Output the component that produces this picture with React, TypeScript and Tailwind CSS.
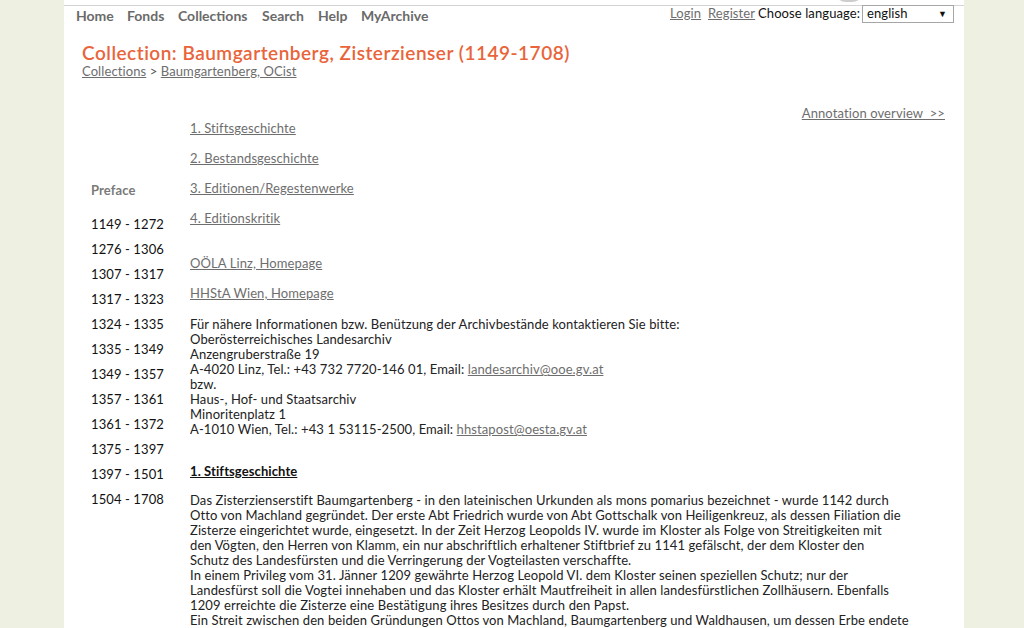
import React from "react";

const font = { fontFamily: "Lato, 'Liberation Sans', sans-serif" };

const dates = [
  "1149 - 1272",
  "1276 - 1306",
  "1307 - 1317",
  "1317 - 1323",
  "1324 - 1335",
  "1335 - 1349",
  "1349 - 1357",
  "1357 - 1361",
  "1361 - 1372",
  "1375 - 1397",
  "1397 - 1501",
  "1504 - 1708",
];

const para = [
  "Das Zisterzienserstift Baumgartenberg - in den lateinischen Urkunden als mons pomarius bezeichnet - wurde 1142 durch",
  "Otto von Machland gegründet. Der erste Abt Friedrich wurde von Abt Gottschalk von Heiligenkreuz, als dessen Filiation die",
  "Zisterze eingerichtet wurde, eingesetzt. In der Zeit Herzog Leopolds IV. wurde im Kloster als Folge von Streitigkeiten mit",
  "den Vögten, den Herren von Klamm, ein nur abschriftlich erhaltener Stiftbrief zu 1141 gefälscht, der dem Kloster den",
  "Schutz des Landesfürsten und die Verringerung der Vogteilasten verschaffte.",
  "In einem Privileg vom 31. Jänner 1209 gewährte Herzog Leopold VI. dem Kloster seinen speziellen Schutz; nur der",
  "Landesfürst soll die Vogtei innehaben und das Kloster erhält Mautfreiheit in allen landesfürstlichen Zollhäusern. Ebenfalls",
  "1209 erreichte die Zisterze eine Bestätigung ihres Besitzes durch den Papst.",
  "Ein Streit zwischen den beiden Gründungen Ottos von Machland, Baumgartenberg und Waldhausen, um dessen Erbe endete",
];

function A({ children, className = "" }: { children: React.ReactNode; className?: string }) {
  return <a href="#" className={"text-[#6e6e6e] underline " + className}>{children}</a>;
}

export default function App() {
  return (
    <div className="min-h-screen bg-[#eef1e1] flex text-[13px] tracking-[0.1px] text-[#222]" style={font}>
      <div className="w-[900px] ml-[64px] bg-white min-h-[628px] relative">
        <div className="absolute left-[770px] top-[-22px] w-[30px] h-[24px] rounded-full bg-[#b8b8b8] opacity-70" />
        <div className="h-[5px]" />
        <div className="border-t border-[#d4d4d4] flex justify-between items-start">
          <nav className="flex pl-[12px] h-[19px] items-center text-[14px] tracking-normal font-bold text-[#6a6a6a]">
            <a href="#" className="w-[51px]">Home</a>
            <a href="#" className="w-[51px]">Fonds</a>
            <a href="#" className="w-[84px]">Collections</a>
            <a href="#" className="w-[56px]">Search</a>
            <a href="#" className="w-[43px]">Help</a>
            <a href="#">MyArchive</a>
          </nav>
          <div className="flex items-center pr-[10px] h-[17px] mt-[-1px]">
            <A className="w-[38px]">Login</A>
            <A className="w-[50px]">Register</A>
            <span className="w-[104px] text-[#111] whitespace-nowrap">Choose language:</span>
            <div className="w-[92px] h-[18px] border border-[#a6a6a6] flex items-center justify-between pl-[4px] pr-[6px] text-[#111]">
              <span>english</span>
              <span className="text-[9px]">▼</span>
            </div>
          </div>
        </div>
        <div className="pl-[18px] mt-[17px]">
          <h1 className="text-[19px] leading-[22px] tracking-[0.5px] text-[#e9643b] font-semibold">
            Collection: Baumgartenberg, Zisterzienser (1149-1708)
          </h1>
          <div className="leading-[15px] text-[#555]">
            <A>Collections</A> &gt; <A>Baumgartenberg, OCist</A>
          </div>
        </div>
        <div className="flex mt-[27px] leading-[15px]">
          <div className="w-[126px] pl-[27px] shrink-0">
            <div className="mt-[77px] font-bold text-[#7a7a7a]">Preface</div>
            <div className="mt-[14px]">
              {dates.map((d) => (
                <div key={d} className="h-[25px] flex items-center text-[#111] whitespace-nowrap">{d}</div>
              ))}
            </div>
          </div>
          <div className="flex-1 pr-[19px] flex flex-col">
            <div className="text-right"><A>Annotation overview &nbsp;&gt;&gt;</A></div>
            <div><A>1. Stiftsgeschichte</A></div>
            <div className="mt-[15px]"><A>2. Bestandsgeschichte</A></div>
            <div className="mt-[15px]"><A>3. Editionen/Regestenwerke</A></div>
            <div className="mt-[15px]"><A>4. Editionskritik</A></div>
            <div className="mt-[30px]"><A>OÖLA Linz, Homepage</A></div>
            <div className="mt-[15px]"><A>HHStA Wien, Homepage</A></div>
            <div className="mt-[16px] whitespace-nowrap">
              <div>Für nähere Informationen bzw. Benützung der Archivbestände kontaktieren Sie bitte:</div>
              <div>Oberösterreichisches Landesarchiv</div>
              <div>Anzengruberstraße 19</div>
              <div>A-4020 Linz, Tel.: +43 732 7720-146 01, Email: <A>landesarchiv@ooe.gv.at</A></div>
              <div>bzw.</div>
              <div>Haus-, Hof- und Staatsarchiv</div>
              <div>Minoritenplatz 1</div>
              <div>A-1010 Wien, Tel.: +43 1 53115-2500, Email: <A>hhstapost@oesta.gv.at</A></div>
            </div>
            <div className="mt-[27px] font-bold underline text-[#111]">1. Stiftsgeschichte</div>
            <div className="mt-[14px] whitespace-nowrap">
              {para.map((l, i) => (
                <div key={i}>{l}</div>
              ))}
            </div>
          </div>
        </div>
      </div>
    </div>
  );
}
